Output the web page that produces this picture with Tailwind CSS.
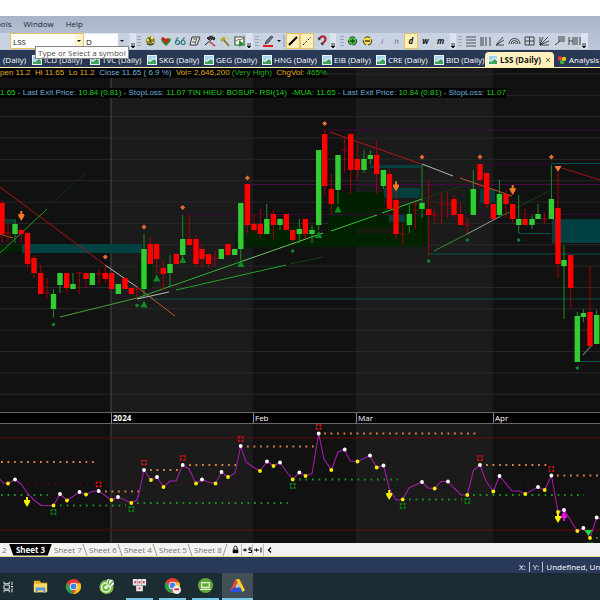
<!DOCTYPE html>
<html lang="en">
<head>
<meta charset="utf-8">
<title>LSS (Daily)</title>
<script src="https://cdn.jsdelivr.net/npm/@tailwindcss/browser@4"></script>
</head>
<body class="min-h-screen overflow-x-hidden bg-[#1b2c33] font-['Open_Sans',sans-serif] text-[8px] leading-[10px]">
<div class="h-4 bg-white"></div>
<header class="bg-linear-to-b from-[#a9b4c8] to-[#bdc8da]">
  <nav class="flex h-4 items-center gap-3 text-[#1c2637]">
    <a href="#" class="-ml-1">ools</a><a href="#">Window</a><a href="#">Help</a>
  </nav>
  <div class="relative flex h-[18px] items-center overflow-visible">
    <div class="flex h-4 items-center bg-[#c9d2e1] pl-[10px]">
      <label class="flex"><span class="sr-only">Symbol</span><input value="LSS" class="h-4 w-[65px] border border-r-0 border-[#e5c365] bg-white px-[2px] leading-[12px] text-[#111]"></label>
      <button aria-label="Open symbols" class="h-4 w-[9px] border border-l-0 border-[#e5c365] bg-[#fff3cc]"><svg viewBox="0 0 8 14" class="h-[14px] w-2"><path d="M2 6h4l-2 2z" fill="#111"/></svg></button>
      <label class="flex"><span class="sr-only">Interval</span><input value="D" class="h-4 w-[34px] border-y border-[#dfe5ef] bg-white px-[2px] leading-[12px] text-[#111]"></label>
      <button aria-label="Open intervals" class="h-4 w-[9px] bg-[#c5cfdf]"><svg viewBox="0 0 8 14" class="h-[14px] w-2"><path d="M2 6h4l-2 2z" fill="#111"/></svg></button>
      <span class="w-[3px]"></span>
      <svg viewBox="0 0 6 16" class="h-4 w-[6px]"><path d="M0 0h6v16h-6z" fill="#dce3ee"/><path d="M1 11h4M1 13h4l-2 2z" stroke="#111" stroke-width=".8"/></svg>
    </div>
    <div id="tools" class="flex h-4 items-center"></div>
    <div role="tooltip" class="absolute left-[35px] top-[14px] z-10 flex h-[13px] items-center whitespace-nowrap border border-[#888] bg-white px-[2px] text-[#505050] shadow">Type or Select a symbol</div>
  </div>
</header>
<nav id="tabs" class="flex h-[17px] items-end overflow-hidden whitespace-nowrap bg-[#293955] text-white"></nav>
<div class="h-px bg-[#fff0b0]"></div>
<main class="bg-black">
  <section class="relative">
    <svg id="price" viewBox="0 68 600 344" class="block w-full"></svg>
    <div class="absolute inset-x-0 top-0 flex flex-col items-start gap-[10px] font-['Liberation_Sans',sans-serif] text-[#1fd01f]">
      <p class="whitespace-pre bg-black text-[#e0b020]"><span>pen 11.2  Hi 11.65  Lo 11.2  </span><span class="text-[#76b4d8]">Close 11.65 ( 6.9 %)  </span><span>Vol= 2,646,200 </span><span class="text-[#20b020]">(Very High)  </span><span>ChgVol: </span><span class="text-[#20c020]">465%</span></p>
      <p class="whitespace-pre bg-black">1.65<span class="text-[#6fb0d8]"> - Last Exit Price: </span>10.84 (0.81)<span class="text-[#6fb0d8]"> - StopLoss: </span>11.07 TIN HIEU: BOSUP- RSI(14)  -MUA: 11.65<span class="text-[#6fb0d8]"> - Last Exit Price: </span>10.84 (0.81)<span class="text-[#6fb0d8]"> - StopLoss: </span>11.07</p>
    </div>
  </section>
  <div class="grid h-3 grid-cols-[111fr_142fr_103fr_137fr_107fr] items-center border-y border-[#666] bg-black text-white">
    <span></span><span class="border-l border-[#888] pl-px font-bold">2024</span><span class="border-l border-[#888] pl-px">Feb</span><span class="border-l border-[#888] pl-px">Mar</span><span class="border-l border-[#888] pl-px">Apr</span>
  </div>
  <svg id="rsi" viewBox="0 424 600 119" class="block w-full"></svg>
</main>
<nav class="flex h-[14px] items-center border-b border-[#e8d890] bg-[#f2f2f0] text-[#777]">
  <a href="#" class="w-[9px] pl-[2px]">2</a>
  <a href="#" class="flex h-3 w-[43px] items-center justify-center bg-black font-bold text-white [clip-path:polygon(0_0,100%_0,90%_100%,10%_100%)]">Sheet 3</a>
  <div id="sheets" class="flex"></div>
  <div class="flex items-center text-black">
    <button aria-label="Lock" class="h-3 w-3 border-r border-[#bbb]"><svg viewBox="0 0 12 12" class="size-[11px]"><path d="M3 6h6v4H3z"/><path d="M4.300 6V4a1.700 1.700 0 0 1 3.400 0v2" fill="none" stroke="#000"/></svg></button>
    <button aria-label="Add sheet" class="h-3 w-[11px] border-r border-[#bbb]"><svg viewBox="0 0 11 12" class="h-3 w-[11px]"><path d="M1 6h4M3 4.500v3" stroke="#000"/><path d="M9.500 4H7v2h2.500v2.500H6.500" fill="none" stroke="#000"/></svg></button>
    <button aria-label="Insert sheet" class="h-3 w-[11px] border-r border-[#bbb]"><svg viewBox="0 0 11 12" class="h-3 w-[11px]"><path d="M1 6h5M3.500 4.500v3M8 3.500v5" stroke="#000"/></svg></button>
    <button aria-label="Scroll left" class="h-3 w-3"><svg viewBox="0 0 12 12" class="size-3"><path d="M7 3.500L4.500 6 7 8.500" fill="none" stroke="#000" stroke-width="1.200"/></svg></button>
  </div>
</nav>
<div class="flex h-4 items-end justify-end overflow-hidden whitespace-nowrap bg-[#293a5a] pb-px text-white">
  <div class="flex w-[81px] shrink-0 gap-[3px]"><span>X:</span><span class="border-l border-white/70 pl-[3px]">Y:</span><span class="border-l border-white/70 pl-[3px]">Undefined, Undefined</span></div>
</div>
<footer id="taskbar" class="flex h-[27px] overflow-hidden bg-[#1b2c33]"></footer>

<script>
const icons = [
 ['grip','','<path d="M2 3v10M4 3v10" stroke="#6b7890" stroke-dasharray="1 2"/>',7],
 ['Colours','','<circle cx="7.500" cy="8" r="4.500" fill="#918a28"/><path d="M4 6h2v2H4zM8 4h2v2H8zM9 9h2v1H9z" fill="#f5eb65"/><path d="M4 11l4 1 3-2M6 5l2 4" stroke="#333" fill="none"/>',15],
 ['Favourites','','<path d="M3 6l3-1 2 2 2-2 3 1-1 3-4 4-4-4z" fill="#258c25"/><path d="M3 5l2-1 3 2 2-1 1 2-3 4z" fill="#d32222"/>',15],
 ['Inspect','','<g fill="none" stroke="#24747d" stroke-width="1.200"><circle cx="4.500" cy="9.500" r="2"/><circle cx="10" cy="9.500" r="2"/><path d="M2.500 9l2-4h1M8 9l3-4h1"/></g>',14],
 ['Script','','<path d="M5 4h8l-3 8H3z" fill="#eee" stroke="#333"/><path d="M6 6h4M5 9h4M10 5l-2 6" stroke="#555"/>',15],
 ['Build','','<path d="M3 12l7-6M5 5l4-2 4 2-1 2-3-2-2 2z" stroke="#222" fill="#444"/><path d="M8 9l5 4" stroke="#c33" stroke-width="1.600"/>',15],
 ['Wizard','','<path d="M6 6l6 7" stroke="#83761a" stroke-width="1.800"/><path d="M3 7l3-3 3 1-4 4z" fill="#b4a82c"/><path d="M10 3v3M11 6h2" stroke="#ddd04a"/>',15],
 ['Run chart','','<path d="M3 4h9v8H3z" fill="#f5f8f2" stroke="#356138" stroke-width="1.200"/><path d="M4 8l3-2 2 1 2-2" stroke="#a55" fill="none"/><path d="M7 7l5 4-5 3z" fill="#219428"/>',14],
 ['more','','',7],
 ['grip','','<path d="M3 3v10M5 3v10" stroke="#6b7890" stroke-dasharray="1 2"/>',8],
 ['Pen colour','','<path d="M2 12h10v2H2z" fill="#e51e1e"/><path d="M4 11l1-3 5-5 2 1-5 6z" fill="#66758b" stroke="#333" stroke-width=".7"/>',15],
 ['Pen menu','','<path d="M1 7h4l-2 2z" fill="#111"/>',6],
 ['sep','','<path d="M2 2v12" stroke="#8e9bb0"/>',4],
 ['Trend line','s','<path d="M3 12l8-8" stroke="#000" stroke-width="2.200"/>',14],
 ['Dashed line','s','<path d="M3 12l8-8" stroke="#111" stroke-dasharray="2 1.500"/>',14],
 ['Magnet','','<path d="M5 6l2-2c4-2 6 2 3 5l-2 2" fill="none" stroke="#a82937" stroke-width="2.200"/><path d="M4 5l2 2M7 10l2 2" stroke="#333" stroke-width="1.600"/>',16],
 ['more','','',6],
 ['grip','','<path d="M5 3v10M7 3v10" stroke="#6b7890" stroke-dasharray="1 2"/>',9],
 ['Zoom in','','<circle cx="7.500" cy="8" r="4.200" fill="#3ecb3e" stroke="#333" stroke-dasharray="6 2"/><path d="M5 8h5M7.500 5.500v5" stroke="#174c17" stroke-width="1.300"/>',15],
 ['Zoom out','','<circle cx="7.500" cy="8" r="4.200" fill="#eee044" stroke="#333" stroke-dasharray="6 2"/><path d="M5 8h5" stroke="#484018" stroke-width="1.500"/>',15],
 ['Intraday','t','i',14],['Hourly','t','h',15],['Daily','ts','d',14],['Weekly','tb','w',15],['Monthly','tb','m',15],
 ['sep','','',2],
 ['more','','',6],
 ['grip','','<path d="M3 3v10M5 3v10" stroke="#6b7890" stroke-dasharray="1 2"/>',8],
 ['Retracement','l','<path d="M2 4h10M2 7h10M2 10h10M2 13h10" stroke-width=".8"/>',14],
 ['Time zones','l','<path d="M3 4v9M5 4v9M8 4v9M12 4v9" stroke-width=".9"/>',15],
 ['Fan','l','<path d="M3 12l7-8M3 12l8-5M3 12h8" stroke-width=".9"/>',14],
 ['Arcs','l','<path d="M2 11a5 5 0 0 1 11 0M4 11a3 3 0 0 1 7 0M6 11a1.500 1.500 0 0 1 3 0" stroke-width=".9"/>',15],
 ['Gann square','l','<path d="M3 4h9v8H3zM7.500 4v8M3 8h9" stroke-width=".9"/>',15],
 ['Gann fan','l','<path d="M3 4v8h9M3 12l3-8M3 12l8-8M3 12l9-4" stroke-width=".9"/>',15],
 ['Callout','l','<path d="M6 4h7M6 6h7M6 8h7M8 8l-5 4" stroke-width=".9"/>',15],
 ['Cycles','l','<path d="M2 4v8M2 8h4M6 4v8M8 4v8M10 4v8M13 4v8" stroke-width=".9"/>',14],
 ['more','','',7]
];
document.getElementById('tools').innerHTML = icons.map(([n,k,d,w]) => {
  if (n==='more') d='<path d="M0 0h7v16h-7z" fill="#dce3ee"/><path d="M1 11h4M1 13h4l-2 2z" stroke="#111" stroke-width=".8"/>';
  const sel=k.includes('s')?'bg-[#ffefbb] border border-[#e5c365]':'bg-[#c9d2e1]';
  if (k[0]==='t') return `<button aria-label="${n}" class="flex h-4 shrink-0 items-center justify-center italic ${sel} ${k.length>1?'font-bold text-[#111]':'text-[#667]'}" style="width:${w}px">${d}</button>`;
  const s=`<svg viewBox="0 0 ${w} 16" width="${w}" height="16" class="block shrink-0" ${k==='l'?'fill="none" stroke="#333"':''}>${d}</svg>`;
  return n==='grip'||n==='sep' ? `<span class="bg-[#c9d2e1]">${s}</span>` : `<button aria-label="${n}" class="flex h-4 shrink-0 items-center justify-center ${sel}" style="width:${w}px">${s}</button>`;
}).join('');

const chartIcon='<svg viewBox="0 0 10 10" class="size-[10px] shrink-0"><path d="M0 0h10v10H0z" fill="#e9f5f8"/><path d="M1 1h8v3L6 3 3 6 1 5z" fill="#a5d3ec"/><path d="M1 6l2 1 4-3 2 2v3H1z" fill="#3fa35c"/></svg>';
const tabs=[['',32],['ICD',58],['TVC',57],['SKG',57],['GEG',58],['HNG',60],['EIB',54],['CRE',58],['BID',51]];
document.getElementById('tabs').innerHTML=tabs.map(([n,w])=>`<a href="#" class="flex h-[15px] shrink-0 items-center gap-[2px]" style="width:${w}px">${n?chartIcon:'<i class="w-px"></i>'}<span>${n} (Daily)</span></a>`).join('')+
 `<a href="#" class="flex h-[15px] w-[69px] shrink-0 items-center gap-[2px] rounded-t-sm bg-[#fff0bd] pl-[3px] font-bold text-[#111]">${chartIcon}<span>LSS (Daily)</span><svg viewBox="0 0 6 6" class="ml-[2px] size-[6px]"><path d="M1 1l4 4M5 1L1 5" stroke="#6d5c2c"/></svg></a>`+
 `<a href="#" class="flex h-[15px] shrink-0 items-center gap-[2px] pl-[3px]"><svg viewBox="0 0 10 10" class="size-[10px]"><circle cx="3" cy="3.500" r="2.200" fill="#e33"/><circle cx="7" cy="4" r="2.200" fill="#eac42a"/><circle cx="5" cy="7" r="2.200" fill="#39b33b"/></svg><span>Analysis1</span></a>`;
document.getElementById('sheets').innerHTML=[7,6,4,5,8].map(n=>`<a href="#" class="flex h-3 w-[35px] items-center whitespace-nowrap pl-[2px]">Sheet ${n}<svg viewBox="0 0 6 12" class="ml-auto h-3 w-[6px] shrink-0"><path d="${n===8?'M5 0L1 12':'M1 0l4 12'}" stroke="#999" fill="none"/></svg></a>`).join('')+'<span class="w-[3px]"></span>';

const L=(x1,y1,x2,y2,c,w=1)=>`<path d="M${x1} ${y1}L${x2} ${y2}" stroke="${c}" stroke-width="${w}"/>`;
const R=(x1,y1,x2,y2,c)=>`<path d="M${x1} ${y1}H${x2}V${y2}H${x1}z" fill="${c}"/>`;
const months=[[0,111],[111,253],[253,356],[356,493],[493,600]];
const bands=(a,b)=>months.map(([x,y],i)=>R(x,a,y,b,i%2?'#1b1b1b':'#111')).join('');

/* centre x, body top, body bottom, high, low, direction (r, g or d for doji) */
const candles=`2 203 234 200 243 r|8 233 233 223 243 d|15 224 234 219 243 g|21.300 230 234 228 243 r|27.500 233 264 232 268 r|34 258 273 255 278 r|40.700 273 294 265 294 r|47 293 293 278 299 d|53.500 294 309 289 318 g|60 273 285 273 293 g|66.700 273 288 273 293 r|73 284 289 273 289 g|79.300 273 273 272 294 d|86 273 279 273 288 r|92.300 273 285 273 285 g|99 274 274 269 285 d|105.300 273 279 265 283 r|111.700 273 289 273 289 r|118.300 284 294 284 294 g|125 278 289 278 289 r|131.300 288 294 288 294 r|137 289 289 287 298 d|144 249 289 234 297 g|150.300 244 264 237 264 r|156.700 244 259 244 273 r|163.300 268 274 260 290 r|170 264 273 255 287 g|176.300 254 264 254 264 r|182.700 239 255 215 259 g|189.300 239 245 215 245 r|196 239 264 235 268 r|202 249 259 245 268 r|208.500 254 264 254 268 r|215 258 258 250 267 d|221.300 249 259 249 259 g|228 244 255 244 257 r|234.700 249 255 249 255 g|240.800 203 249 203 263 g|247.400 184 225 184 233 r|254 224 230 214 233 r|260.300 224 234 209 238 r|266.800 219 234 204 234 g|273.400 214 225 210 239 r|280 219 225 218 230 g|286.300 214 230 214 230 r|292.700 230 240 230 243 r|299.300 229 234 219 243 g|305.400 219 234 219 239 r|312 230 234 225 243 g|318.700 150 225 150 230 g|324.700 134 186 130 195 r|331.300 189 204 174 214 r|338 155 190 155 204 g|344.400 150 150 136 173 d|350.800 134 170 134 194 r|357.400 159 170 143 180 r|364 159 170 150 173 g|370.300 155 159 150 164 g|376.700 155 174 140 194 r|383.400 170 186 170 189 g|389.500 174 209 170 209 r|396 200 234 190 239 r|402.700 234 234 223 245 d|409.300 214 225 205 233 g|415.300 210 210 202 229 d|422 203 209 164 218 g|428.700 209 215 179 255 r|434.700 215 215 209 223 d|441.600 204 204 193 224 d|447.600 204 204 192 218 d|454 199 215 195 218 r|460.600 214 225 203 225 r|467.300 225 225 218 233 d|473.300 189 215 170 215 g|480 164 180 164 188 r|486.700 173 204 173 208 r|493.300 204 219 204 219 r|499.400 194 215 180 218 g|506 194 204 190 218 r|512.700 204 219 204 223 r|518.700 219 225 195 233 g|525 219 225 209 225 r|532 219 225 215 229 g|538 214 219 204 219 g|544.400 219 219 213 224 d|551.400 199 219 165 219 g|558 208 264 173 278 r|564 260 266 245 319 g|570.700 255 288 255 308 r|577.300 316 362 312 362 g|583.400 313 317 309 322 g|590 312 346 266 346 r|596.700 315 344 310 344 g`.split('|').map(s=>s.split(' '));
let p=bands(68,412);
for(let y=74;y<412;y+=21.35)p+=L(0,y,600,y,'#282828');
p+=L(111,68,111,412,'#4a4a4a');
p+=[[0,245,22,252,'#002200'],[248,226,318,247,'#002000'],[235,233,427,247,'#002200'],[328,192,384,233,'#002000'],[384,205,427,233,'#002000'],[138,260,152,288,'#002400'],[466,190,478,213,'#002800'],[5,219,14,223,'#003838'],[22,244,142,253,'#024242'],[370,165,421,168,'#024040'],[384,188,420,198,'#024040'],[389,215,405,222,'#024040'],[480,189,495,203,'#003c40'],[552,219,600,243,'#004040'],[356,228,399,234,'#161c0e']].map(a=>R(...a)).join('');
p+=[[150,299,600,299,'#065050'],[428,254,600,254,'#065050'],[519,233.500,551,233.500,'#065050'],[551,163.500,600,163.500,'#065050'],[577,361.500,600,361.500,'#065050'],[324,130,600,130,'#400840'],[247,184.500,600,184.500,'#480848'],[183,214.500,600,214.500,'#380738'],[480,164,551,164,'#380738'],
 [0,187,105,265,'#a81414'],[105,265,137,287,'#b8b8b8'],[137,287,175,316,'#c0562c'],[0,253,47,209,'#1e9a1e'],[0,234,13,238,'#b06018'],[55,201,86,172,'#0d350d'],[60,317,137,298,'#489d38'],[137,298,240,262,'#36ad32'],[240,262,323,233,'#6cc064'],[137,299,169,292,'#bbb'],[176,290,286,265,'#23a523'],[290,264,323,257,'#164016'],[331,231,377,215,'#35c335'],[382,213,422,199,'#35c335'],[422,199,462,186,'#123c12'],
 [330,132,421,164,'#b01818'],[422,164,453,176,'#b8b8b8'],[460,178,512,196,'#c2562c'],[434,251,467,234,'#348b34'],[467,234,499,217,'#999'],[499,217,512,211,'#278027'],[512,210,549,191,'#124012'],[562,168,600,180,'#a81414'],[583,355,592,345,'#999']].map(a=>L(...a)).join('');
for(const [x,t,b,h,l,k] of candles){const c=k==='g'?'#32cd32':'#f00';p+=L(x,h,x,l,k==='g'?'#259525':'#b40000',.9);p+=k==='d'?L(x-3,t,+x+3,t,'#a00000'):R(x-2.700,t,+x+2.700,b,c);}
for(const [x,y] of [[105.300,257],[144,227],[182.700,207.500],[247.400,178],[324.700,123.500],[422,157],[480,157],[551.400,157]])p+=`<path d="M${x} ${y-2.5}l2.500 2.500-2.500 2.500-2.500-2.500z" fill="#e96c32"/>`;
for(const [x,y] of [[53.500,324.500],[137,305.500],[292.700,251],[428.700,261],[467.300,240],[518.700,240],[577.300,368]])p+=`<circle cx="${x}" cy="${y}" r="1.800" fill="#15802a"/>`;
for(const [x,y] of [[144,304],[156.700,278],[182.700,259.500],[240.800,263.500],[318.700,234.500],[338,209]])p+=`<path d="M${x} ${y-3.5}l3.500 7h-7z" fill="#0d8d1d"/>`;
const arrow=(x,y,c,s=1)=>`<path transform="translate(${x} ${y}) scale(1 ${s})" d="M-1-5h2v3h2v2L0 5-3 0v-2h2z" fill="${c}"/>`;
p+=arrow(21.3,216,'#f07828')+arrow(396,186.5,'#f07828')+arrow(512.7,190,'#f07828')+'<path d="M554.500 166h7l-3.500 6z" fill="#f07838"/>';
document.getElementById('price').innerHTML=p;

let q=bands(424,543)+L(111,424,111,543,'#444')+L(0,438,600,438,'#650b0b')+L(0,530,600,530,'#650b0b');
const dots=(x1,x2,y,c)=>`<path d="M${x1} ${y}H${x2}" stroke="${c}" stroke-width="1.800" stroke-dasharray="1.800 4.700"/>`;
q+=dots(28,138,483.5,'#4a0909')+dots(150,240,483.5,'#351010')+dots(410,548,483.5,'#301010');
q+=[[1,94,462],[105,139,491.500],[150,178,470],[189,236,465],[247,314,446.500],[324,480,433.500],[486,547,465],[557,600,475.500]].map(a=>dots(...a,'#e08040')).join('');
q+=[[1,48,495],[60,126,505.500],[137,288,503],[299,398,479.500],[409,462,499.500],[473,584,495],[596,600,538]].map(a=>dots(...a,'#17901f')).join('');
/* x, y, optional marker: w white, y yellow */
const rsi=`0 479|3 483|8 483.500 y|15 479.500 w|21 484|28 494|34 500|41 505.500|53.500 505.500 y|60 494 w|67 500.500 y|79.500 492 w|86 494.500 y|92 491.500|98.700 491 w|111.500 500 y|118 497 w|131.300 503 y|137 500|139 493|144 470 w|151 480 y|157 477 w|163.500 487 y|170 481|176 481|182.700 465 w|189 469|196 483.500 y|202 479.500 w|208 482|215.500 483.500 y|221.500 472 w|228 477 y|235 473|240.700 446 w|246 462|253 467|260 471 y|267 461.500 w|273.500 466 y|280 462.500 w|286 471|292.700 479.500 y|299.300 472.500 w|305.500 476 y|312 473.500|318.700 433.500 w|324 459|331.300 470 y|338 452|344.700 449.500 w|350 461|357.500 461.500 y|370 455.500 w|376.700 467.500 y|383.500 465.500 w|389.500 489|396 500|402.700 499.500 y|409 488|422 482 w|428 488|434.700 488.500 y|441 481.500|448 481.500 w|454 488|461 495|467.300 495 y|473.500 470|480 465 w|486 481|493.300 491.500 y|499.500 476 w|512 491|519 491|525.300 494 y|538 487 w|544.700 490 y|551.400 475.500 w|558 512 y|564 510 w|577.300 531 y|583.400 528 w|590 538 y|596.700 517.500 w|600 519`.split('|').map(s=>s.split(' '));
q+=`<polyline points="${rsi.map(a=>a[0]+','+a[1]).join(' ')}" fill="none" stroke="#a31ba8" stroke-width="1.100"/>`;
for(const [x,y,c] of [[98.700,484.500,'#e01010'],[144,462.500,'#e01010'],[182.700,458,'#e01010'],[240.700,439,'#e01010'],[318.700,427,'#e01010'],[480,458,'#e01010'],[551.400,469,'#e01010'],[53.500,512,'#0a8f14'],[131.300,509,'#0a8f14'],[292.700,486,'#0a8f14'],[402.700,506,'#0a8f14'],[467.300,501,'#0a8f14'],[590,545,'#0a8f14']])q+=`<rect x="${x-2.200}" y="${y-2.200}" width="4.400" height="4.400" fill="none" stroke="${c}" stroke-width="1.300" stroke-dasharray="3.400 1" stroke-dashoffset="1.700"/>`;
q+=arrow(27,502,'#f8f000')+arrow(389.2,495,'#f8f000')+arrow(558,518,'#f8f000')+arrow(564,516,'#e010e0',-1)+'<path d="M584.500 530h8l-4 6z" fill="#10e030"/>';
for(const [x,y,m] of rsi)if(m)q+=`<circle cx="${x}" cy="${y}" r="1.900" fill="${m==='w'?'#fff':'#f8f000'}"/>`;
document.getElementById('rsi').innerHTML=q;

const chrome='<circle cx="9" cy="9" r="8" fill="#e33b2e"/><path d="M2 5l5 7 2 5A8 8 0 0 1 2 5z" fill="#2ea04b"/><path d="M9 5.500h7.200A8 8 0 0 1 9 17l3.500-6z" fill="#fbc116"/><circle cx="9" cy="9" r="4" fill="#fff"/><circle cx="9" cy="9" r="3.100" fill="#3f83ea"/>';
const apps=[
 ['Task View','<path d="M3 1v3h8V1M3 6h8v6H3zM3 17v-3h8v3M15 1v5M15 11v6" fill="none" stroke="#dce4e6" stroke-width="1.500"/><path d="M13.500 7.500h3v2h-3z" fill="#dce4e6"/>',0],
 ['Files','<path d="M2 3h6l2 2h6v10H2z" fill="#e8a823"/><path d="M2 6h14v9H2z" fill="#ffd766"/><path d="M4 10h10v6h-2v-3H6v3H4z" fill="#4e9ddb"/>',0],
 ['Chrome',chrome,0],
 ['Coc Coc','<circle cx="9" cy="9.500" r="7.500" fill="#7ac143"/><circle cx="8.500" cy="10" r="5.500" fill="#e9f6dc"/><circle cx="8.500" cy="10" r="4" fill="#6cb83a"/><circle cx="8.500" cy="10" r="1.800" fill="#fff"/><path d="M9 8l1-7 6 1 1 5-5 3z" fill="#f0f8e8"/><path d="M10.500 7l1-5M12 8l4-5" stroke="#4f9a2e" stroke-width="1.200"/>',0],
 ['Trading','<path d="M2 2h14v7H2zM5.500 9h7v6h-7z" fill="#f1e8e6"/><path d="M6.700 2v7M11.300 2v7M5.500 9h7" stroke="#888" stroke-width=".7"/><path d="M3.500 4.500h2v2h-2zM8 4.500h2v2H8zM12.500 4.500h2v2h-2zM8 11h2v2H8z" fill="#c8384a"/>',1],
 ['Chrome profile',chrome+'<circle cx="13.500" cy="13.500" r="4.500" fill="#eee"/><path d="M11 12h5v2h-5z" fill="#c34"/>',1],
 ['Remote','<circle cx="9" cy="9" r="8" fill="#62a735"/><path d="M5 6h8v5H5zM3.500 13h11" fill="none" stroke="#e1f2d5" stroke-width="1.300"/>',1],
 ['AmiBroker','<path d="M7 2h4l-4.500 9-1.500 4H1z" fill="#ef4a36"/><path d="M8 2h3l6 12-3 2-5-10z" fill="#f2d629"/><path d="M11 2l6 12v-1L12 3z" fill="#e23a2a"/><path d="M1 15l4-4h7l2 5H2z" fill="#2e4fda"/><path d="M6.500 11L9 6l2.500 5z" fill="#c7cef5"/>',2]];
document.getElementById('taskbar').innerHTML=apps.map(([n,d,a],i)=>`<button aria-label="${n}" class="flex shrink-0 items-center justify-center ${i===0?'-ml-[9px]':''} ${a===2?'border-b-2 border-[#76c8e8] bg-[#405056]':a?'border-b-2 border-[#76c8e8] mx-[3px]':''}" style="width:${a===1?27:i===7?31:33}px"><svg viewBox="0 0 18 18" class="${i===0?'size-3':'size-[17px]'}">${d}</svg></button>`).join('');
</script>
</body>
</html>
